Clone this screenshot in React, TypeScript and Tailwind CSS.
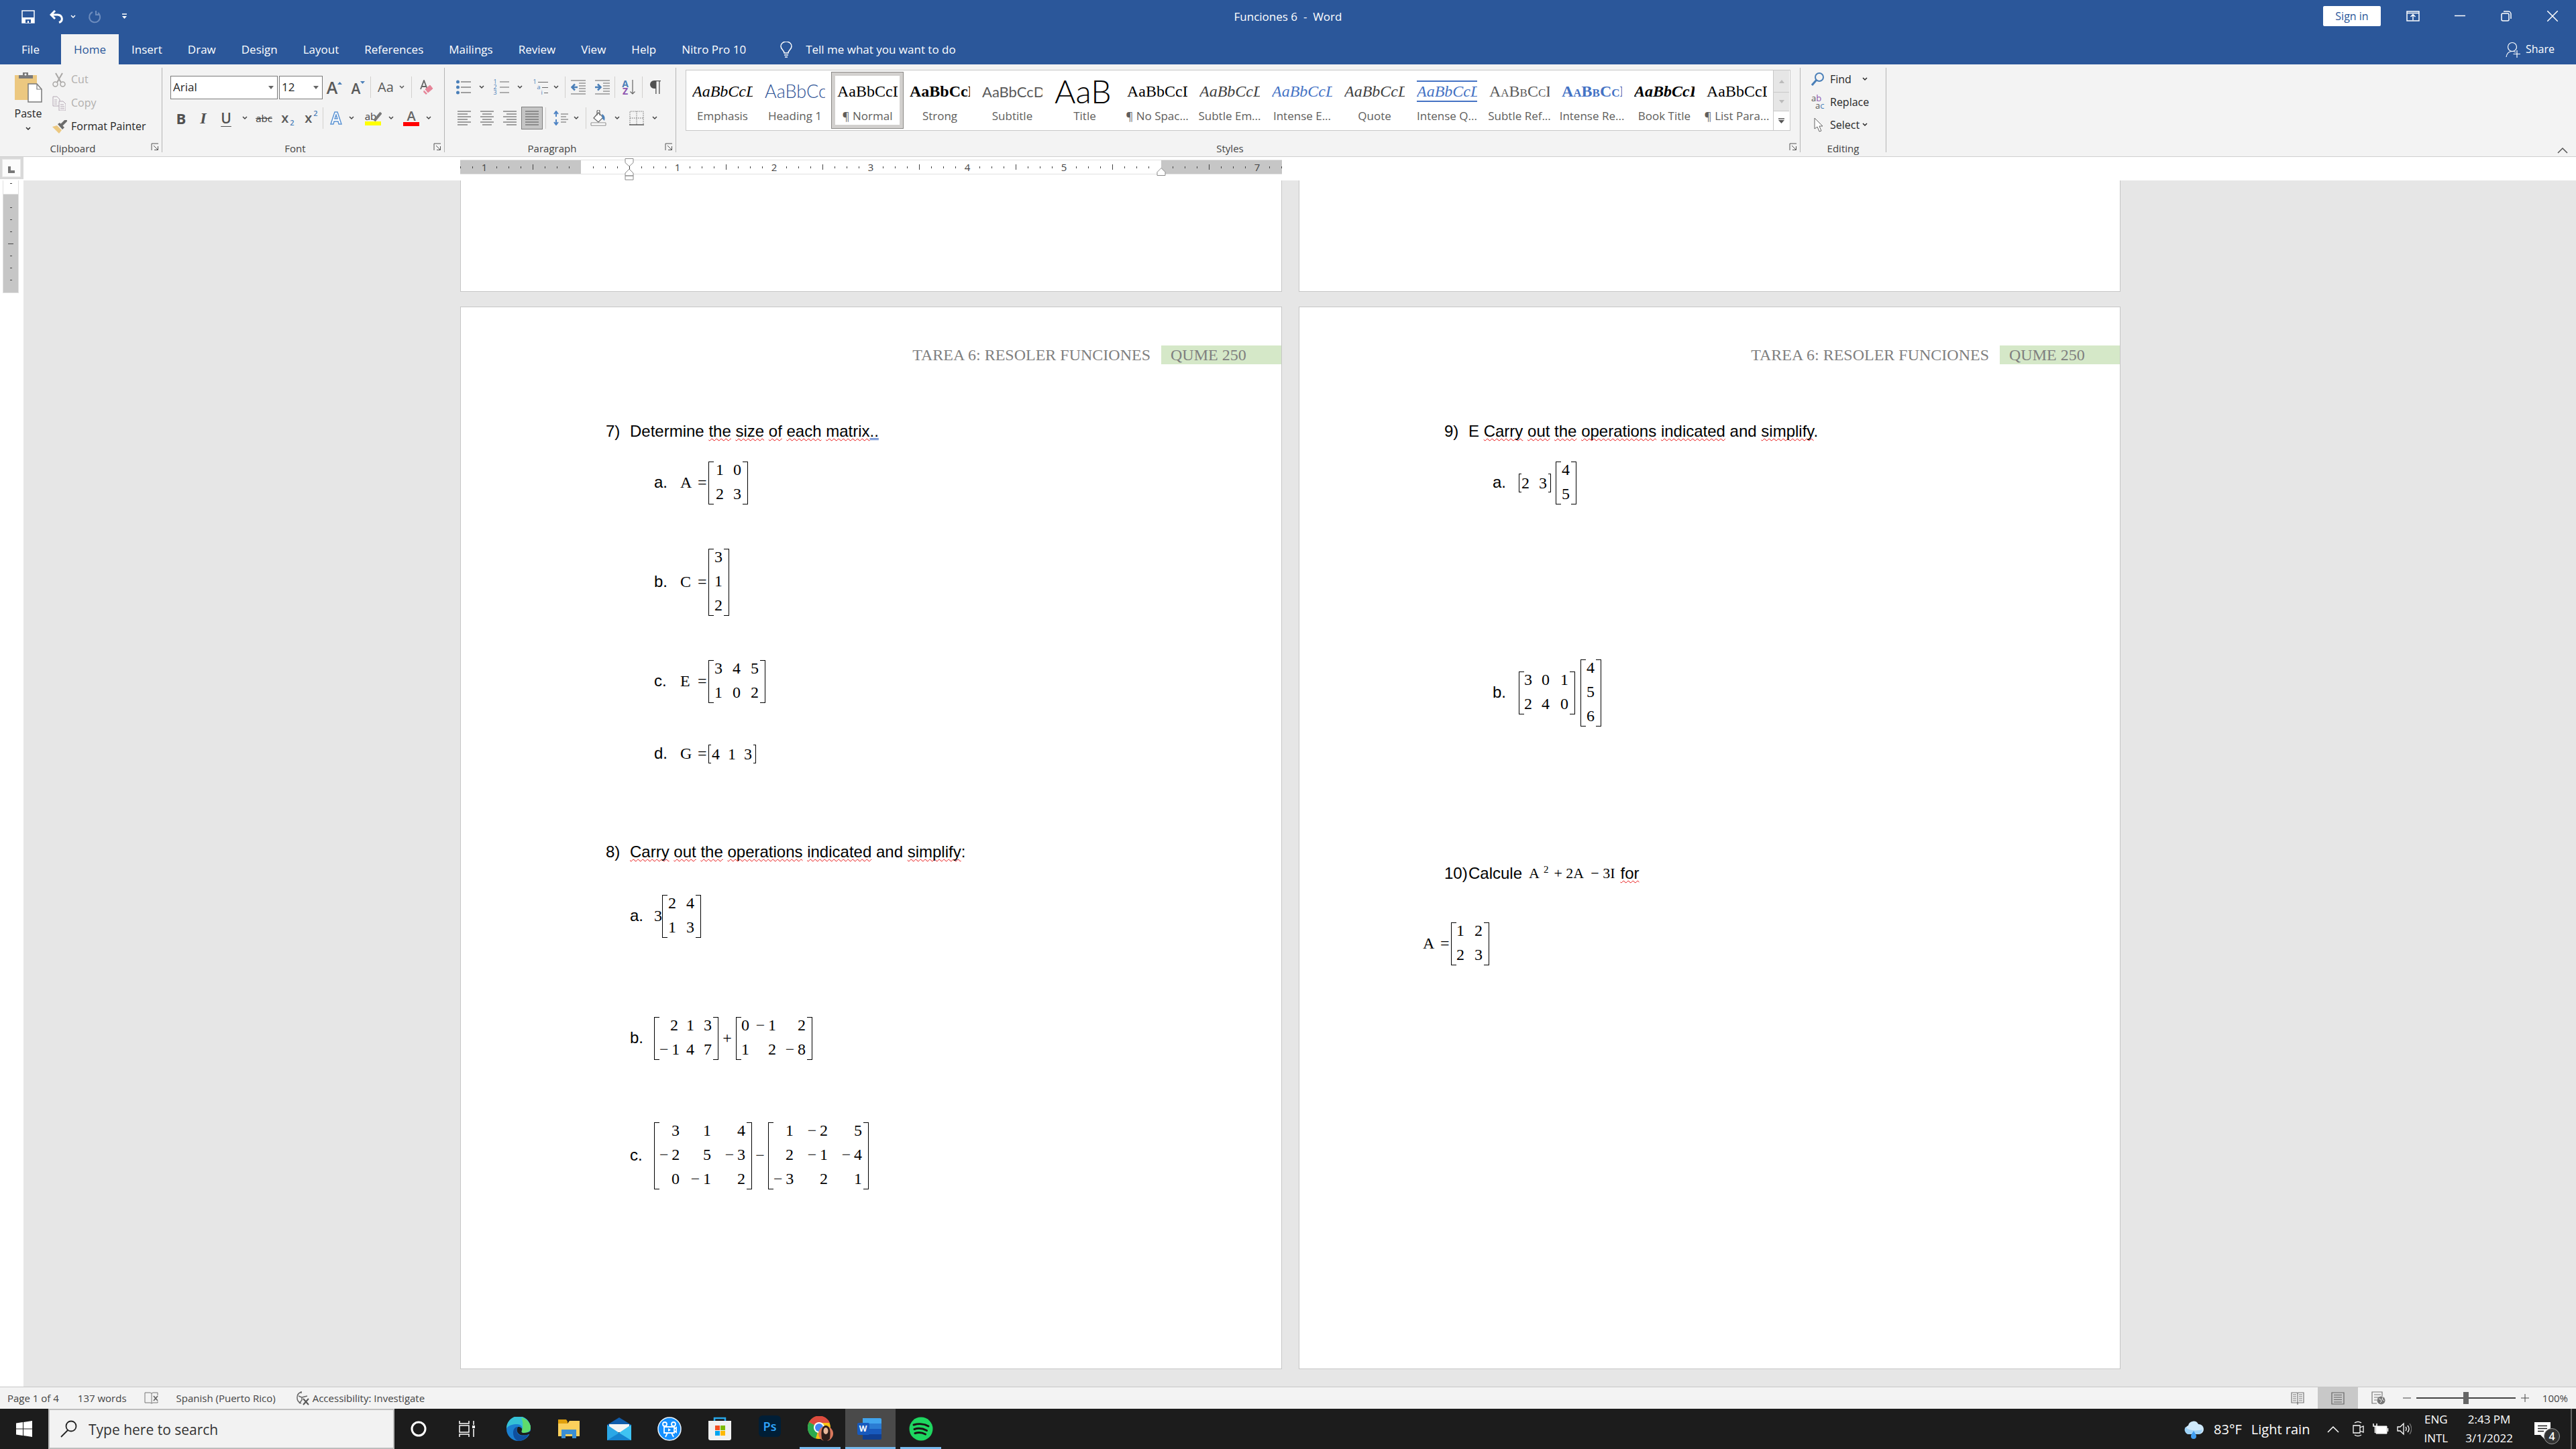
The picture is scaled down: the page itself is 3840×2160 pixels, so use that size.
import { Fragment, ReactNode } from "react";
import { twMerge } from "tailwind-merge";

const tabs = [
  "Insert",
  "Draw",
  "Design",
  "Layout",
  "References",
  "Mailings",
  "Review",
  "View",
  "Help",
  "Nitro Pro 10",
];

const serif = "font-['Liberation_Serif',serif] text-2xl leading-7";
const lato = "font-[Lato,sans-serif] font-light";

const styleItems = [
  { name: "Emphasis", look: "italic text-black" },
  { name: "Heading 1", look: twMerge(lato, "text-[27px] text-[#2f5496]") },
  { name: "¶ Normal", look: "text-black", active: true },
  { name: "Strong", look: "font-bold text-black" },
  { name: "Subtitle", look: twMerge(lato, "font-normal text-[22px] text-[#5a5a5a]") },
  { name: "Title", look: twMerge(lato, "text-5xl text-black"), sample: "AaB" },
  { name: "¶ No Spac...", look: "text-black" },
  { name: "Subtle Em...", look: "italic text-[#404040]" },
  { name: "Intense E...", look: "italic text-[#4472c4]" },
  { name: "Quote", look: "italic text-[#404040]" },
  { name: "Intense Q...", look: "italic text-[#4472c4] border-y-2 border-[#4472c4]" },
  { name: "Subtle Ref...", look: "text-[#5a5a5a] [font-variant-caps:small-caps]" },
  { name: "Intense Re...", look: "font-bold text-[#4472c4] [font-variant-caps:small-caps]" },
  { name: "Book Title", look: "italic font-bold text-black" },
  { name: "¶ List Para...", look: "text-black" },
];

/* ---------- small shared pieces ---------- */

function Svg({
  w,
  h,
  children,
  className,
}: {
  w: number;
  h: number;
  children: ReactNode;
  className?: string;
}) {
  return (
    <svg
      width={w}
      height={h}
      viewBox={`0 0 ${w} ${h}`}
      fill="none"
      aria-hidden="true"
      className={twMerge("shrink-0", className)}
    >
      {children}
    </svg>
  );
}

function Chevron({ className }: { className?: string }) {
  return (
    <Svg w={8} h={6} className={className}>
      <path d="M1 1l3 3 3-3" stroke="currentColor" strokeWidth="1.5" />
    </Svg>
  );
}

function Tool({
  label,
  className,
  menu,
  children,
}: {
  label: string;
  className?: string;
  menu?: boolean;
  children: ReactNode;
}) {
  return (
    <button
      type="button"
      aria-label={label}
      className={twMerge("flex h-9 items-center justify-center gap-3 text-[#444]", className)}
    >
      {children}
      {menu && <Chevron />}
    </button>
  );
}

function Divider() {
  return <span className="h-8 w-px shrink-0 bg-[#d2d0ce]" />;
}

function Group({
  title,
  className,
  pad,
  launcher,
  children,
}: {
  title: string;
  className?: string;
  pad?: string;
  launcher?: boolean;
  children: ReactNode;
}) {
  return (
    <section
      aria-label={title}
      className={twMerge("relative mt-[5px] h-[126px] shrink-0 border-r border-[#b5b5b5]", className)}
    >
      <div className={twMerge("h-[111px]", pad)}>{children}</div>
      <div
        className={twMerge(
          "flex h-[18px] items-center justify-center text-[15px] leading-[18px] text-[#444]",
          launcher && "pr-6"
        )}
      >
        {title}
      </div>
      {launcher && (
        <button type="button" aria-label={`${title} settings`} className="absolute right-1 bottom-0.5">
          <Svg w={12} h={12}>
            <path d="M1 11V1h10M4 4l6 6M10.500 5v5.500H5" stroke="#555" />
          </Svg>
        </button>
      )}
    </section>
  );
}

function Lines({ rows }: { rows: [number, number][] }) {
  return (
    <Svg w={22} h={22}>
      {rows.map(([from, to], i) => (
        <path key={i} d={`M${from} ${1 + i * 4}H${to}`} stroke="#666" strokeWidth="1.2" />
      ))}
    </Svg>
  );
}

/* ---------- title bar and tabs ---------- */

function TitleBar() {
  return (
    <header className="bg-[#2b579a] text-white">
      <div className="grid h-[51px] grid-cols-[1fr_auto_1fr] items-start">
        <div className="flex h-[49px] items-center pl-8">
          <button type="button" aria-label="Save">
            <Svg w={20} h={20}>
              <path d="M1 1h18v18H1z" stroke="#fff" strokeWidth="1.500" />
              <path d="M1 11h18v8H1z" fill="#fff" />
              <path d="M6 14h8v5h-3v-3H9v3H6z" fill="#2b579a" />
            </Svg>
          </button>
          <button type="button" aria-label="Undo" className="ml-[22px]">
            <Svg w={23} h={20}>
              <path d="M8 1L2 7l6 6M3 7h9a7 6 0 0 1 2 11.500" stroke="#fff" strokeWidth="3" />
            </Svg>
          </button>
          <button type="button" aria-label="Undo history" className="ml-2">
            <Chevron />
          </button>
          <button type="button" aria-label="Repeat" className="ml-[18px]">
            <Svg w={20} h={20}>
              <path d="M7 3a8 8 0 1 0 8 1M12 1v6h6" stroke="#6d8cbd" strokeWidth="2" />
            </Svg>
          </button>
          <button type="button" aria-label="Customize toolbar" className="ml-[30px]">
            <Svg w={9} h={9}>
              <path d="M1 1h7" stroke="#fff" strokeWidth="1.500" />
              <path d="M1 4h7l-3.500 4z" fill="#fff" />
            </Svg>
          </button>
        </div>
        <h1 className="flex h-[49px] items-center text-[17px] whitespace-pre">Funciones 6  -  Word</h1>
        <div className="flex h-[47px] items-center justify-end pr-[27px]">
          <button
            type="button"
            className="mr-[38px] h-[30px] w-[86px] rounded-[2px] bg-white text-base leading-[30px] text-[#2b579a]"
          >
            Sign in
          </button>
          <button type="button" aria-label="Ribbon display options" className="mr-[52px]">
            <Svg w={20} h={16}>
              <path d="M1 1h18v14H1zM1 3.500h18M10 14V6M6.500 9L10 5.500 13.500 9" stroke="#fff" strokeWidth="1.500" />
            </Svg>
          </button>
          <button type="button" aria-label="Minimize" className="mr-[53px]">
            <Svg w={16} h={16}>
              <path d="M0 7.500h16" stroke="#fff" strokeWidth="1.500" />
            </Svg>
          </button>
          <button type="button" aria-label="Restore" className="mr-[53px]">
            <Svg w={16} h={16}>
              <rect x="1" y="4" width="11" height="11" rx="2" stroke="#fff" strokeWidth="1.500" />
              <path d="M4 1h7a4 4 0 0 1 4 4v7" stroke="#fff" strokeWidth="1.500" />
            </Svg>
          </button>
          <button type="button" aria-label="Close">
            <Svg w={16} h={16}>
              <path d="M0 0l16 16M16 0L0 16" stroke="#fff" strokeWidth="1.500" />
            </Svg>
          </button>
        </div>
      </div>

      <nav className="flex h-[45px] items-center text-[17px] leading-[45px]">
        <button type="button" className="w-[91px]">
          File
        </button>
        <button type="button" className="w-[86px] bg-[#f3f3f3] text-[#2b579a]">
          Home
        </button>
        {tabs.map((tab) => (
          <button type="button" key={tab} className="px-[19px] whitespace-nowrap">
            {tab}
          </button>
        ))}
        <label className="ml-8 flex flex-1 items-center gap-5">
          <Svg w={18} h={24}>
            <path
              d="M6 17c0-4-5-5-5-10a8 7 0 0 1 16 0c0 5-5 6-5 10zM6 20h6M7 23h4"
              stroke="#fff"
              strokeWidth="1.500"
            />
          </Svg>
          <input
            aria-label="Tell me what you want to do"
            placeholder="Tell me what you want to do"
            className="w-80 outline-none placeholder:text-white placeholder:opacity-100"
          />
        </label>
        <button type="button" className="flex items-center gap-2 pr-8 text-base leading-[45px]">
          <Svg w={22} h={24}>
            <circle cx="10" cy="8" r="6.500" stroke="#fff" strokeWidth="1.200" />
            <path d="M1 23c1-6 4-8.500 9-8.500 2 0 4 .5 5 1.500M17 13v11M11.500 18.500h11" stroke="#fff" strokeWidth="1.200" />
          </Svg>
          Share
        </button>
      </nav>
    </header>
  );
}

/* ---------- ribbon ---------- */

function Clipboard() {
  return (
    <Group title="Clipboard" launcher className="w-[242px]">
      <div className="flex">
        <button type="button" className="ml-[18px] flex w-12 flex-col items-center pt-1.5 text-base leading-6 text-[#262626]">
          <Svg w={42} h={46}>
            <path d="M1 5h33v37H1z" fill="#ecc880" />
            <path d="M7 5h6V1h8v4h7v5H7z" fill="#7a7a7a" />
            <circle cx="17" cy="4" r="1.500" fill="#fff" />
            <path d="M21 18h13l7 8v19H21z" fill="#fff" stroke="#7a7a7a" strokeWidth="1.500" />
            <path d="M34 18v8h7" stroke="#7a7a7a" strokeWidth="1.200" />
          </Svg>
          <span className="mt-1">Paste</span>
          <Chevron className="mt-2" />
        </button>
        <div className="ml-3 flex flex-col text-base leading-[35px] text-[#b1afad]">
          <button type="button" className="flex items-center gap-2">
            <Svg w={20} h={22}>
              <path d="M5 1l8 14M15 1L7 15" stroke="#a9a7a5" strokeWidth="2" />
              <circle cx="4.500" cy="17.500" r="3.500" stroke="#a9a7a5" strokeWidth="1.500" />
              <circle cx="15.500" cy="17.500" r="3.500" stroke="#a9a7a5" strokeWidth="1.500" />
            </Svg>
            Cut
          </button>
          <button type="button" className="flex items-center gap-2">
            <Svg w={20} h={22}>
              <path d="M1 1h6l4 4v10H1zM3 6h4M3 9h4M3 12h4" stroke="#b5a9b5" />
              <path d="M10 8h6l4 4v10H10z" fill="#f3f3f3" stroke="#b5a9b5" />
              <path d="M12 13h5M12 16h6M12 19h6" stroke="#b5a9b5" />
            </Svg>
            Copy
          </button>
          <button type="button" className="flex items-center gap-1.5 text-[#262626]">
            <Svg w={22} h={20}>
              <path d="M0 10l7-2 7 7-4 5z" fill="#ecc880" />
              <path d="M8 6l3-2 7 7-3 3z" fill="#6b6b6b" />
              <path d="M14 7l6-6" stroke="#6b6b6b" strokeWidth="4" strokeLinecap="round" />
            </Svg>
            Format Painter
          </button>
        </div>
      </div>
    </Group>
  );
}

function Combo({ label, value, className }: { label: string; value: string; className: string }) {
  return (
    <div className={twMerge("relative h-[35px]", className)}>
      <select
        aria-label={label}
        className="h-full w-full appearance-none border border-[#7a7a7a] bg-white pl-[3px] text-[17px] text-[#262626]"
      >
        <option>{value}</option>
      </select>
      <Svg w={8} h={5} className="absolute top-[15px] right-1.5">
        <path d="M0 0h8L4 5z" fill="#666" />
      </Svg>
    </div>
  );
}

function FontGroup() {
  return (
    <Group title="Font" launcher className="w-[421px]" pad="pl-3">
      <div className="flex items-center pt-[11px]">
        <Combo label="Font name" value="Arial" className="w-40" />
        <Combo label="Font size" value="12" className="ml-0.5 w-[65px]" />
        <Tool label="Grow font" className="w-[35px] gap-0 text-[25px] leading-none font-semibold text-[#595959]">
          A
          <Svg w={7} h={16}>
            <path d="M0 4h7L3.500 0z" fill="#4a7fb8" />
          </Svg>
        </Tool>
        <Tool label="Shrink font" className="w-9 gap-0 pt-1 text-[21px] leading-none font-semibold text-[#595959]">
          A
          <Svg w={7} h={22}>
            <path d="M0 0h7L3.500 4z" fill="#4a7fb8" />
          </Svg>
        </Tool>
        <Divider />
        <Tool label="Change case" menu className="w-[60px] gap-2 text-xl leading-none text-[#595959]">
          Aa
        </Tool>
        <Divider />
        <Tool label="Clear formatting" className="w-11">
          <Svg w={20} h={22}>
            <path d="M1 14L6 1l5 13M3 10h6" stroke="#666" strokeWidth="1.800" />
            <path d="M8 14l7-6 4 5-7 6z" fill="#e68498" stroke="#e68498" />
            <path d="M6 15.500l5 5-2 1.500-4-4z" fill="#e68498" />
          </Svg>
        </Tool>
      </div>
      <div className="mt-2.5 flex items-center">
        <Tool label="Bold" className="w-8 text-[22px] leading-none font-bold text-[#505050]">
          B
        </Tool>
        <Tool label="Italic" className="w-[34px] font-['Liberation_Serif',serif] text-2xl leading-none font-bold italic text-[#505050]">
          I
        </Tool>
        <Tool label="Underline" className="w-[34px] text-[21px] leading-none font-semibold text-[#505050] underline decoration-1 underline-offset-4">
          U
        </Tool>
        <Tool label="Underline style" className="w-[22px]">
          <Chevron />
        </Tool>
        <Tool label="Strikethrough" className="w-[35px] text-[15px] leading-none line-through">
          abc
        </Tool>
        <Tool label="Subscript" className="w-9 gap-0.5 text-xl leading-none font-semibold text-[#595959]">
          x<span className="pt-3 text-[11px] leading-none text-[#4a7fb8]">2</span>
        </Tool>
        <Tool label="Superscript" className="w-[34px] gap-0.5 text-xl leading-none font-semibold text-[#595959]">
          x<span className="pb-4 text-[11px] leading-none text-[#4a7fb8]">2</span>
        </Tool>
        <Divider />
        <Tool label="Text effects" menu className="w-[55px] gap-2.5">
          <Svg w={18} h={20}>
            <path
              d="M1 19L7 1h4l6 18h-4l-1-4H6l-1 4zM7 11h4L9 5z"
              fill="#fff"
              stroke="#5b93d3"
              strokeWidth="1.500"
            />
          </Svg>
        </Tool>
        <Tool label="Text highlight color" menu className="w-[57px] gap-2.5">
          <span className="flex flex-col items-center text-[15px] leading-4">
            <span className="flex">
              ab
              <Svg w={12} h={16} className="-ml-1">
                <path d="M1 15l10-12" stroke="#777" strokeWidth="4" />
              </Svg>
            </span>
            <span className="h-1.5 w-6 bg-[#ff0]" />
          </span>
        </Tool>
        <Tool label="Font color" menu className="w-14 gap-2.5">
          <span className="flex flex-col items-center text-xl leading-4 font-semibold text-[#666]">
            A
            <span className="mt-px h-1.5 w-6 bg-[#f00]" />
          </span>
        </Tool>
      </div>
    </Group>
  );
}

function ParagraphGroup() {
  return (
    <Group title="Paragraph" launcher className="w-[345px]" pad="pl-2.5">
      <div className="flex items-center pt-[11px]">
        <Tool label="Bullets" menu className="w-14">
          <Svg w={22} h={22}>
            {[3, 11, 19].map((y) => (
              <Fragment key={y}>
                <circle cx="2.500" cy={y} r="2.500" fill="#4a7fb8" />
                <path d={`M7 ${y}h15`} stroke="#666" strokeWidth="1.200" />
              </Fragment>
            ))}
          </Svg>
        </Tool>
        <Tool label="Numbering" menu className="w-14">
          <span className="flex items-center gap-1">
            <span className="text-[9px] leading-2 text-[#4a7fb8]">
              1<br />2<br />3
            </span>
            <Svg w={14} h={22}>
              <path d="M0 3h14M0 11h14M0 19h14" stroke="#666" strokeWidth="1.200" />
            </Svg>
          </span>
        </Tool>
        <Tool label="Multilevel list" menu className="w-[57px] gap-2">
          <span className="flex w-[22px] flex-col text-[9px] leading-2 text-[#4a7fb8]">
            <span className="flex items-center gap-0.5">
              1<span className="h-px flex-1 bg-[#666]" />
            </span>
            <span className="flex items-center gap-0.5 pl-1.5">
              a<span className="h-px flex-1 bg-[#666]" />
            </span>
            <span className="flex items-center gap-0.5 pl-3">
              i<span className="h-px flex-1 bg-[#666]" />
            </span>
          </span>
        </Tool>
        <Divider />
        <Tool label="Decrease indent" className="w-[37px]">
          <Svg w={22} h={22}>
            <path d="M0 1h22M12 5h10M12 9h10M12 13h10M12 17h10M0 21h22" stroke="#666" strokeWidth="1.200" />
            <path d="M10 11H2M6 6.500L1.500 11 6 15.500" stroke="#4a7fb8" strokeWidth="2.500" />
          </Svg>
        </Tool>
        <Tool label="Increase indent" className="w-9">
          <Svg w={22} h={22}>
            <path d="M0 1h22M12 5h10M12 9h10M12 13h10M12 17h10M0 21h22" stroke="#666" strokeWidth="1.200" />
            <path d="M0 11h8M4 6.500L8.500 11 4 15.500" stroke="#4a7fb8" strokeWidth="2.500" />
          </Svg>
        </Tool>
        <Divider />
        <Tool label="Sort" className="w-10 gap-0.5">
          <span className="flex flex-col text-sm leading-[11px] font-bold text-[#4a7fb8]">
            A<span className="text-[#8e56b0]">Z</span>
          </span>
          <Svg w={8} h={22}>
            <path d="M4 0v21M.5 17.500L4 21l3.500-3.500" stroke="#666" strokeWidth="1.200" />
          </Svg>
        </Tool>
        <Divider />
        <Tool label="Show marks" className="w-[38px]">
          <Svg w={16} h={20}>
            <path d="M6 0h10v1.300h-1.500V20h-1.300V1.300H9.500V20H8.200V12H6A6 6 0 0 1 6 0z" fill="#505050" />
          </Svg>
        </Tool>
      </div>
      <div className="mt-2.5 flex items-center">
        <Tool label="Align left" className="ml-0.5 w-[34px]">
          <Lines rows={[[1, 21], [1, 16], [1, 21], [1, 16], [1, 21], [1, 16]]} />
        </Tool>
        <Tool label="Center" className="w-[34px]">
          <Lines rows={[[1, 21], [4, 18], [1, 21], [4, 18], [1, 21], [4, 18]]} />
        </Tool>
        <Tool label="Align right" className="w-[34px]">
          <Lines rows={[[1, 21], [6, 21], [1, 21], [6, 21], [1, 21], [6, 21]]} />
        </Tool>
        <Tool label="Justify" className="mr-1 h-[34px] w-8 border border-[#7d7d7d] bg-[#c5c5c5]">
          <Lines rows={[[1, 21], [1, 21], [1, 21], [1, 21], [1, 21], [1, 21]]} />
        </Tool>
        <Divider />
        <Tool label="Line spacing" menu className="w-[59px] gap-2">
          <Svg w={22} h={22}>
            <path d="M4 9V2M1 5l3-4 3 4M4 13v7M1 17l3 4 3-4" stroke="#4f84c4" strokeWidth="2" />
            <path d="M11 5h11M11 9h8M11 13h11M11 17h8" stroke="#666" strokeWidth="1.200" />
          </Svg>
        </Tool>
        <Divider />
        <Tool label="Shading" menu className="w-14">
          <Svg w={24} h={24}>
            <path d="M5 12l7-8 7 7-7 7z" fill="#fff" stroke="#666" strokeWidth="1.200" />
            <path d="M10 8V2a2 2 0 0 1 4 0v6" stroke="#666" strokeWidth="1.200" />
            <path d="M17 6c5 2 5 6 4 10l-3-3z" fill="#4a7fb8" />
            <path d="M1 19h22v4H1z" fill="#fff" stroke="#8a8a8a" />
          </Svg>
        </Tool>
        <Tool label="Borders" menu className="w-[58px]">
          <Svg w={22} h={22}>
            <path d="M1 21V1h20v20M11 1v20M1 11h20" stroke="#666" strokeDasharray="1.500 1.500" />
            <path d="M0 21h22" stroke="#555" strokeWidth="1.500" />
          </Svg>
        </Tool>
      </div>
    </Group>
  );
}

function StylesGroup() {
  return (
    <Group title="Styles" launcher className="w-[1676px]" pad="pt-[3px]">
      <div className="ml-3.5 flex h-[91px] w-[1647px] border border-[#c8c8c8] bg-white">
        {styleItems.map(({ name, look, sample, active }) => (
          <button
            type="button"
            key={name}
            className={twMerge(
              "mt-0.5 flex h-[85px] w-[108px] shrink-0 flex-col items-center border border-transparent text-[#605e5c]",
              active && "border-[#8a8886] ring-[5px] ring-[#d2d0ce] ring-inset"
            )}
          >
            <span className="flex h-[56px] w-[90px] items-center overflow-hidden">
              <span className={twMerge(serif, "w-full overflow-hidden text-left whitespace-nowrap", sample && "leading-[50px]", look)}>
                {sample ?? "AaBbCcDd"}
              </span>
            </span>
            <span className="text-[17px] leading-[18px] whitespace-nowrap">{name}</span>
          </button>
        ))}
        <div className="flex w-6 flex-col border-l border-[#c8c8c8]">
          <button type="button" aria-label="Previous styles" className="flex h-8 items-center justify-center bg-[#e6e6e6]">
            <Svg w={8} h={5}>
              <path d="M0 5h8L4 0z" fill="#bbb" />
            </Svg>
          </button>
          <button type="button" aria-label="Next styles" className="flex h-[29px] items-center justify-center border-y border-[#c8c8c8] bg-[#e6e6e6]">
            <Svg w={8} h={5}>
              <path d="M0 0h8L4 5z" fill="#bbb" />
            </Svg>
          </button>
          <button type="button" aria-label="More styles" className="flex flex-1 items-center justify-center">
            <Svg w={9} h={8}>
              <path d="M0 1h9" stroke="#555" strokeWidth="1.500" />
              <path d="M0 3h9L4.500 8z" fill="#555" />
            </Svg>
          </button>
        </div>
      </div>
    </Group>
  );
}

function EditingGroup() {
  return (
    <Group title="Editing" className="w-32">
      <div className="flex flex-col pl-4 text-base leading-[34px] text-[#262626]">
        <button type="button" className="flex items-center gap-2">
          <Svg w={20} h={20}>
            <circle cx="12" cy="7" r="6" stroke="#4a7fb8" strokeWidth="2" />
            <path d="M8 11l-7 8" stroke="#4a7fb8" strokeWidth="3" />
          </Svg>
          Find
          <Chevron className="ml-2" />
        </button>
        <button type="button" className="flex items-center gap-2">
          <span className="w-5 text-left text-[13px] leading-[11px] text-[#555]">
            a<span className="text-[#8e56b0]">b</span>
            <br />
            <span className="pl-1.5">
              a<span className="text-[#4a7fb8]">c</span>
            </span>
          </span>
          Replace
        </button>
        <button type="button" className="flex items-center gap-2">
          <Svg w={20} h={22}>
            <path d="M5 1v16l4-3 3 7 3-1-3-7h5z" fill="#fff" stroke="#666" />
          </Svg>
          Select
          <Chevron className="-ml-1" />
        </button>
      </div>
    </Group>
  );
}

function Ribbon() {
  return (
    <div className="flex h-[138px] border-b border-[#cfcfcf] bg-[#f3f3f3]">
      <Clipboard />
      <FontGroup />
      <ParagraphGroup />
      <StylesGroup />
      <EditingGroup />
      <button type="button" aria-label="Collapse ribbon" className="mr-3 mb-1 ml-auto self-end">
        <Svg w={16} h={10}>
          <path d="M1 9l7-7 7 7" stroke="#555" strokeWidth="1.500" />
        </Svg>
      </button>
    </div>
  );
}

/* ---------- rulers ---------- */

// one cell every eighth of an inch, zero sits on the text margin
const rulerMarks = Array.from({ length: 69 }, (_, i) => i - 10);

function RulerMark({ mark }: { mark: number }) {
  if (mark % 8 === 0 && mark !== 0 && mark !== 48) return <>{Math.abs(mark / 8)}</>;
  if (mark === 0 || mark === 48) return null;
  if (mark % 4 === 0) return <span className="h-2 w-px bg-[#444]" />;
  return <span className="h-[3px] w-px bg-[#444]" />;
}

function HorizontalRuler() {
  return (
    <div className="flex h-[35px] bg-white">
      <button type="button" aria-label="Tab stop" className="h-[33px] w-[35px] shrink-0 bg-[#d9d9d9] pl-[3px]">
        <span className="flex h-[27px] w-7 items-center justify-center border border-[#e8e8e8] bg-[#fcfcfc]">
          <Svg w={10} h={10} className="mt-1">
            <path d="M0 0h4v6h6v4H0z" fill="#777" />
          </Svg>
        </span>
      </button>
      <div className="flex flex-1 justify-center pr-7">
        <div className="w-[2475px]">
          <div className="relative mt-1 w-[1225px]">
            <div className="overflow-hidden border-y border-[#e1e1e1] bg-[linear-gradient(to_right,#c6c6c6_180px,#fff_180px,#fff_1045px,#c6c6c6_1045px)]">
              <div className="-ml-[9px] flex h-5">
                {rulerMarks.map((mark) => (
                  <span
                    key={mark}
                    className="flex w-[18px] shrink-0 items-center justify-center text-[15px] leading-5 text-[#444]"
                  >
                    <RulerMark mark={mark} />
                  </span>
                ))}
              </div>
            </div>
            <Svg w={14} h={33} className="absolute -top-0.5 left-[245px]">
              <path
                d="M1 .5h12v6L7 12 1 6.500zM7 16l6 6v4H1v-4zM1 26h12v6H1z"
                fill="#fff"
                stroke="#8a8a8a"
              />
            </Svg>
            <Svg w={14} h={12} className="absolute top-3 left-[1038px]">
              <path d="M7 .5l6 6v5H1v-5z" fill="#fff" stroke="#8a8a8a" />
            </Svg>
          </div>
        </div>
      </div>
    </div>
  );
}

function VerticalRuler() {
  return (
    <div className="w-[35px] shrink-0 bg-white pl-1">
      <div className="flex h-5 w-6 justify-center border-x border-[#e1e1e1] pt-1">
        <span className="h-px w-[3px] bg-[#444]" />
      </div>
      <div className="flex h-[148px] w-6 flex-col border border-[#e1e1e1] bg-[#c6c6c6] pt-2.5">
        {[1, 2, 3, 4, 5, 6, 7].map((mark) => (
          <span key={mark} className="flex h-[18px] items-center justify-center">
            <span className={twMerge("h-px bg-[#444]", mark === 4 ? "w-2" : "w-[3px]")} />
          </span>
        ))}
      </div>
    </div>
  );
}

/* ---------- document ---------- */

function Typo({ children }: { children: string }) {
  return (
    <>
      {children.split(" ").map((word, i) => (
        <Fragment key={i}>
          {i > 0 && " "}
          <span className="underline decoration-[#e81010] decoration-wavy decoration-1 underline-offset-2 [text-decoration-skip-ink:none]">
            {word}
          </span>
        </Fragment>
      ))}
    </>
  );
}

function Matrix({ rows, cols }: { rows: string[]; cols: string }) {
  const single = rows.length === 1;
  return (
    <span className="flex">
      <span className={twMerge("border-y border-l border-black", single ? "w-1" : "w-2")} />
      <span
        className={twMerge(
          "grid gap-y-3 text-right leading-6 whitespace-nowrap",
          single ? "py-0.5" : "pb-1",
          cols
        )}
      >
        {rows.flatMap((row, r) =>
          row.split(" ").map((cell, c) => <span key={`${r}-${c}`}>{cell.replace("−", "−\u2009")}</span>)
        )}
      </span>
      <span className={twMerge("ml-0.5 border-y border-r border-black", single ? "w-1" : "w-2")} />
    </span>
  );
}

function Question({ no, className, children }: { no: string; className?: string; children: ReactNode }) {
  return (
    <div className={twMerge("flex items-center pl-[216px] text-2xl leading-7 whitespace-nowrap", className)}>
      <span className="w-9">{no}</span>
      <p className="flex items-center whitespace-pre">{children}</p>
    </div>
  );
}

function Item({
  label,
  outdent,
  className,
  children,
}: {
  label?: string;
  outdent?: boolean;
  className?: string;
  children: ReactNode;
}) {
  return (
    <div
      className={twMerge("flex items-center text-2xl leading-7", outdent ? "pl-[252px]" : "pl-72", className)}
    >
      {label && <span className={twMerge("pb-0.5", outdent ? "w-9" : "w-[39px]")}>{label}</span>}
      <span className={twMerge(serif, "flex items-center")}>{children}</span>
    </div>
  );
}

function Name({ children }: { children: string }) {
  return (
    <>
      <span className="w-[26px] pb-0.5">{children}</span>
      <span className="w-4 pb-0.5">=</span>
    </>
  );
}

function Page({ children }: { children: ReactNode }) {
  return (
    <article className="h-[1584px] border border-[#c6c6c6] bg-white text-black">
      <div className={twMerge(serif, "mt-[57px] flex justify-end text-[#7f7f7f]")}>
        <span className="pr-4">TAREA 6: RESOLER FUNCIONES</span>
        <span className="w-[179px] bg-[#d5e8c8] pl-3.5">QUME 250</span>
      </div>
      {children}
    </article>
  );
}

function LeftPage() {
  return (
    <Page>
      <Question no="7)" className="mt-[86px]">
        <span>
          Determine <Typo>the size of each matrix</Typo>
          <span className="underline decoration-[#2f5fc0] decoration-double decoration-1 underline-offset-2">..</span>
        </span>
      </Question>
      <Item label="a." className="mt-[31px]">
        <Name>A</Name>
        <Matrix rows={["1 0", "2 3"]} cols="grid-cols-[15px_26px]" />
      </Item>
      <Item label="b." className="mt-[66px]">
        <Name>C</Name>
        <Matrix rows={["3", "1", "2"]} cols="grid-cols-[13px]" />
      </Item>
      <Item label="c." className="mt-[66px]">
        <Name>E</Name>
        <Matrix rows={["3 4 5", "1 0 2"]} cols="grid-cols-[13px_27px_27px]" />
      </Item>
      <Item label="d." className="mt-[61px]">
        <Name>G</Name>
        <Matrix rows={["4 1 3"]} cols="grid-cols-[13px_24px_24px]" />
      </Item>

      <Question no="8)" className="mt-[117px]">
        <span>
          <Typo>Carry out the operations indicated</Typo> and <Typo>simplify</Typo>:
        </span>
      </Question>
      <Item label="a." outdent className="mt-[50px]">
        <span className="pb-0.5">3</span>
        <Matrix rows={["2 4", "1 3"]} cols="grid-cols-[13px_27px]" />
      </Item>
      <Item label="b." outdent className="mt-[118px]">
        <Matrix rows={["2 1 3", "−1 4 7"]} cols="grid-cols-[28px_24px_26px]" />
        <span className="w-[26px] pb-0.5 text-center">+</span>
        <Matrix rows={["0 −1 2", "1 2 −8"]} cols="grid-cols-[12px_40px_44px]" />
      </Item>
      <Item label="c." outdent className="mt-[93px]">
        <Matrix rows={["3 1 4", "−2 5 −3", "0 −1 2"]} cols="grid-cols-[30px_47px_51px]" />
        <span className="w-6 pb-0.5 text-center">−</span>
        <Matrix rows={["1 −2 5", "2 −1 −4", "−3 2 1"]} cols="grid-cols-[30px_51px_51px]" />
      </Item>
    </Page>
  );
}

function RightPage() {
  return (
    <Page>
      <Question no="9)" className="mt-[86px]">
        <span>
          E <Typo>Carry out the operations indicated</Typo> and <Typo>simplify</Typo>.
        </span>
      </Question>
      <Item label="a." className="mt-[31px]">
        <Matrix rows={["2 3"]} cols="grid-cols-[12px_26px]" />
        <span className="w-[7px]" />
        <Matrix rows={["4", "5"]} cols="grid-cols-[13px]" />
      </Item>
      <Item label="b." className="mt-[231px]">
        <Matrix rows={["3 0 1", "2 4 0"]} cols="grid-cols-[12px_26px_28px]" />
        <span className="w-2" />
        <Matrix rows={["4", "5", "6"]} cols="grid-cols-[13px]" />
      </Item>
      <Question no="10)" className="mt-[205px]">
        Calcule
        <span className={twMerge(serif, "flex items-center pl-2.5 text-[22px]")}>
          A<sup className="top-0 pb-3 pl-1.5 text-[15px] leading-4">2</sup>
          <span className="pl-2">+ 2A</span>
          <span className="pl-2.5">− 3I</span>
        </span>
        <span className="pl-2">
          <Typo>for</Typo>
        </span>
      </Question>
      <Item className="mt-[59px] pl-[184px]">
        <Name>A</Name>
        <Matrix rows={["1 2", "2 3"]} cols="grid-cols-[12px_27px]" />
      </Item>
    </Page>
  );
}

function Workspace() {
  return (
    <main className="flex min-h-0 flex-1 overflow-hidden bg-[#e6e6e6]">
      <VerticalRuler />
      <div className="flex flex-1 justify-center pr-7 font-['Liberation_Sans',sans-serif]">
        <div className="grid grid-cols-[1225px_1225px] content-start gap-x-[25px] gap-y-[22px]">
          <div className="h-[166px] border border-t-0 border-[#c6c6c6] bg-white" />
          <div className="h-[166px] border border-t-0 border-[#c6c6c6] bg-white" />
          <LeftPage />
          <RightPage />
        </div>
      </div>
    </main>
  );
}

/* ---------- status bar ---------- */

function StatusBar() {
  return (
    <footer className="flex h-[33px] items-center border-t border-[#c6c6c6] bg-[#f3f3f3] pr-3 pl-[11px] text-[15px] leading-8 text-[#444]">
      <span>Page 1 of 4</span>
      <span className="ml-7">137 words</span>
      <Svg w={22} h={18} className="ml-[26px]">
        <path d="M1 1h8l2 1v15l-2-1H1zM11 2l2-1h7v4M11 17l2-1h7v-2" stroke="#777" />
        <path d="M14 6l6 7M20 6l-6 7" stroke="#666" strokeWidth="1.800" />
      </Svg>
      <span className="ml-[26px]">Spanish (Puerto Rico)</span>
      <Svg w={22} h={22} className="ml-[29px]">
        <path d="M9 2a9 9 0 0 0 0 17M9 1v3M5 8l5 2v4l-4 5M10 10l8-2" stroke="#666" strokeWidth="1.500" />
        <path d="M12 12l8 9M20 12l-8 9" stroke="#555" strokeWidth="2" />
      </Svg>
      <span className="ml-1">Accessibility: Investigate</span>

      <div className="ml-auto flex items-center">
        <button type="button" aria-label="Read mode" className="mr-5">
          <Svg w={20} h={19}>
            <path d="M1 1h8l1 1 1-1h8v15h-8l-1 1-1-1H1zM10 2v17" stroke="#777" strokeWidth="1.200" />
            <path d="M3 4h5M3 7h5M3 10h5M3 13h5M12 4h5M12 7h5M12 10h5M12 13h5" stroke="#777" />
          </Svg>
        </button>
        <button type="button" aria-label="Print layout" className="flex h-8 w-[60px] items-center justify-center bg-[#c8c8c8]">
          <Svg w={20} h={19}>
            <path d="M1 1h18v17H1z" stroke="#666" strokeWidth="1.200" />
            <path d="M4 4.500h12M4 8h12M4 11.500h12M4 15h12" stroke="#666" />
          </Svg>
        </button>
        <button type="button" aria-label="Web layout" className="ml-5">
          <Svg w={21} h={20}>
            <path d="M16 7V1H1v17h7M4 5h10M4 9h7M4 13h4" stroke="#777" strokeWidth="1.200" />
            <circle cx="14.500" cy="13.500" r="6" fill="#777" />
            <path d="M11 11l3 1 1 3-2 2M17 9l-1 3 3 2" stroke="#f3f3f3" />
          </Svg>
        </button>
        <button type="button" aria-label="Zoom out" className="ml-[26px]">
          <Svg w={12} h={12}>
            <path d="M0 6h12" stroke="#444" />
          </Svg>
        </button>
        <input
          type="range"
          aria-label="Zoom"
          defaultValue={50}
          className="mx-2 h-[18px] w-[148px] appearance-none bg-[linear-gradient(#444,#444)] bg-[length:100%_2px] bg-center bg-no-repeat [&::-webkit-slider-thumb]:h-[18px] [&::-webkit-slider-thumb]:w-2 [&::-webkit-slider-thumb]:appearance-none [&::-webkit-slider-thumb]:bg-[#666]"
        />
        <button type="button" aria-label="Zoom in">
          <Svg w={12} h={12}>
            <path d="M0 6h12M6 0v12" stroke="#444" />
          </Svg>
        </button>
        <span className="ml-5">100%</span>
      </div>
    </footer>
  );
}

/* ---------- taskbar ---------- */

const apps: { name: string; open?: boolean; active?: boolean; icon: ReactNode }[] = [
  {
    name: "Edge",
    icon: (
      <Svg w={36} h={36}>
        <circle cx="18" cy="18" r="18" fill="#1b7fd0" />
        <path d="M0 18A18 18 0 0 1 36 16c0 6-5 8-10 8-4 0-4-2-3-4 2-4-1-9-7-9C8 11 1 14 0 18z" fill="#35c1d6" />
        <path d="M22 1c8 2 14 8 14 15 0 6-5 8-10 8-4 0-4-2-3-4 2-5 2-12-1-19z" fill="#5fdc6c" />
        <path d="M10 24c0-6 3-9 7-9-3 4-2 9 2 12 4 2 9 2 14-1-4 8-11 10-15 10-5-1-8-6-8-12z" fill="#0f4f9e" />
        <path d="M17 15c-2 4-2 8 2 11 3 2 9 2 14 0l3 0 0-5c-2 2-6 3-10 3-4 0-4-2-3-4 1-3-2-5-6-5z" fill="#1c1c1c" />
      </Svg>
    ),
  },
  {
    name: "File Explorer",
    icon: (
      <Svg w={32} h={28}>
        <path d="M0 0h12l2 3v5H0z" fill="#e0a00c" />
        <path d="M0 6h14l3-4h15v23H0z" fill="#fbd05c" />
        <path d="M5 28V15h22v13h-6v-6H11v6z" fill="#3b8fd3" />
      </Svg>
    ),
  },
  {
    name: "Mail",
    icon: (
      <Svg w={36} h={34}>
        <path d="M0 11L18 0l18 11v4H0z" fill="#0f5cab" />
        <path d="M3 10h30v12H3z" fill="#f4f4f4" />
        <path d="M0 11l18 12 18-12v23H0z" fill="#2ba7e6" />
        <path d="M0 34l18-11 18 11z" fill="#1683cf" />
        <path d="M36 11v23L18 23z" fill="#3fc3f2" />
      </Svg>
    ),
  },
  {
    name: "Video editor",
    icon: (
      <Svg w={36} h={36}>
        <circle cx="18" cy="18" r="17" fill="#1590ff" stroke="#eef6ff" strokeWidth="1.500" />
        <circle cx="11" cy="11" r="3" stroke="#fff" strokeWidth="1.800" />
        <circle cx="24" cy="11" r="3" stroke="#fff" strokeWidth="1.800" />
        <path d="M10 15h15v9H10zM25 18l3-2v7l-3-2M15 24l-3 6M21 24l3 6" stroke="#fff" strokeWidth="1.800" />
        <path d="M16 17l4 2.500-4 2.500z" fill="#fff" />
      </Svg>
    ),
  },
  {
    name: "Microsoft Store",
    icon: (
      <Svg w={36} h={36}>
        <path d="M10 8V2h16v6" stroke="#28a8ea" strokeWidth="2.500" />
        <path d="M1 6h34v26a3 3 0 0 1-3 3H4a3 3 0 0 1-3-3z" fill="#f1f1f1" />
        <path d="M11 13h7v7h-7z" fill="#f25022" />
        <path d="M19 13h7v7h-7z" fill="#7fba00" />
        <path d="M11 21h7v7h-7z" fill="#00a4ef" />
        <path d="M19 21h7v7h-7z" fill="#ffb900" />
      </Svg>
    ),
  },
  {
    name: "Photoshop",
    icon: (
      <span className="mb-2 flex h-8 w-[33px] items-center justify-center rounded-md bg-[#001e36] text-lg leading-none font-semibold text-[#31a8ff]">
        Ps
      </span>
    ),
  },
  {
    name: "Chrome",
    open: true,
    icon: (
      <Svg w={38} h={38}>
        <circle cx="17" cy="17" r="17" fill="#fbc116" />
        <path d="M17 17L2 9A17 17 0 0 1 33 10H17z" fill="#dd4b3e" />
        <path d="M17 17l-5 16.500A17 17 0 0 1 2 9z" fill="#2da94f" />
        <circle cx="17" cy="17" r="8" fill="#fff" />
        <circle cx="17" cy="17" r="6" fill="#4285f4" />
        <circle cx="27" cy="26" r="11" fill="#d9785c" />
        <path d="M21 34c-2-14 1-20 6-20s8 6 6 20l-4 3h-5z" fill="#2b1d1a" />
        <ellipse cx="27" cy="22" rx="3.500" ry="5" fill="#e8b79a" />
      </Svg>
    ),
  },
  {
    name: "Word",
    open: true,
    active: true,
    icon: (
      <span className="relative mr-1">
        <Svg w={36} h={32}>
          <path d="M8 0h26a2 2 0 0 1 2 2v6H8z" fill="#41a5ee" />
          <path d="M8 8h28v8H8z" fill="#2b7cd3" />
          <path d="M8 16h28v8H8z" fill="#185abd" />
          <path d="M8 24h28v6a2 2 0 0 1-2 2H8z" fill="#103f91" />
          <rect y="7" width="18" height="18" rx="2" fill="#185abd" />
        </Svg>
        <span className="absolute top-[7px] left-0 w-[18px] text-center text-xs leading-[18px] font-bold text-white">
          W
        </span>
      </span>
    ),
  },
  {
    name: "Spotify",
    open: true,
    icon: (
      <Svg w={36} h={36}>
        <circle cx="18" cy="18" r="17.500" fill="#1ed760" />
        <path
          d="M7 12c7-2 16-1.500 22 2M8 18.500c6-2 13-1 18.500 2M9 24.500c5-1.500 11-1 15.500 1.500"
          stroke="#191414"
          strokeWidth="3"
          strokeLinecap="round"
        />
      </Svg>
    ),
  },
];

function Taskbar() {
  return (
    <nav aria-label="Taskbar" className="flex h-[60px] bg-[#1c1c1c] text-white">
      <button type="button" aria-label="Start" className="flex w-[72px] items-center justify-center">
        <Svg w={24} h={24}>
          <path d="M0 3.500l10-1.400v9.400H0zM11 2l13-2v11.500H11zM0 12.500h10v9.400L0 20.500zM11 12.500h13V24l-13-2z" fill="#fff" />
        </Svg>
      </button>
      <label className="flex w-[516px] items-center gap-4 border-2 border-[#bdbdbd] bg-[#f2f2f2] pl-4">
        <Svg w={26} h={26}>
          <circle cx="16" cy="9" r="7.500" stroke="#222" strokeWidth="1.800" />
          <path d="M11 15L1 25" stroke="#222" strokeWidth="1.800" />
        </Svg>
        <input
          aria-label="Search"
          placeholder="Type here to search"
          className="flex-1 pt-1 text-[21px] outline-none placeholder:text-[#333] placeholder:opacity-100"
        />
      </label>
      <button type="button" aria-label="Cortana" className="flex w-[72px] items-center justify-center">
        <Svg w={24} h={24}>
          <circle cx="12" cy="12" r="10" stroke="#fff" strokeWidth="3" />
        </Svg>
      </button>
      <button type="button" aria-label="Task view" className="mr-[3px] flex w-[72px] items-center justify-center">
        <Svg w={24} h={24}>
          <path d="M1 0v4h14V0M1 24v-4h14v4M1 7h14v10H1zM22 0v6M22 12v12" stroke="#fff" strokeWidth="1.500" />
          <path d="M20 7h4v4h-4z" fill="#fff" />
        </Svg>
      </button>
      {apps.map(({ name, icon, open, active }) => (
        <button
          type="button"
          key={name}
          aria-label={name}
          className={twMerge(
            "relative flex w-[75px] items-center justify-center",
            active && "bg-[#4a4a4a]"
          )}
        >
          {icon}
          {open && (
            <span className={twMerge("absolute bottom-0 h-[3px] bg-[#76b9ed]", active ? "w-full" : "w-[61px]")} />
          )}
        </button>
      ))}

      <div className="ml-auto flex items-center text-[17px] leading-7">
        <button type="button" className="flex items-center gap-3.5 pt-0.5 text-xl">
          <Svg w={32} h={30}>
            <path d="M8 22a7 7 0 0 1 0-13 8 8 0 0 1 15-2 7.500 7.500 0 0 1 1 15z" fill="#cfe9fb" />
            <path d="M8 22a7 7 0 0 1-4-11c3 5 14 7 25 4-1 4-3 7-6 7z" fill="#9fd3f7" />
            <path d="M16 17c3 5 4 6 4 8a4 4 0 0 1-8 0c0-2 1-3 4-8z" fill="#3f9df0" />
          </Svg>
          <span>83°F</span>
          <span>Light rain</span>
        </button>
        <button type="button" aria-label="Hidden icons" className="ml-[26px]">
          <Svg w={18} h={11}>
            <path d="M1 10l8-8 8 8" stroke="#fff" strokeWidth="1.500" />
          </Svg>
        </button>
        <Svg w={18} h={24} className="ml-5">
          <path d="M1 7h10v11H1zM11 10l5-2v9l-5-2M3 3c3-2 7-2 10 0M3 21c3 2 7 2 10 0" stroke="#fff" strokeWidth="1.300" />
        </Svg>
        <Svg w={24} h={18} className="ml-3">
          <path d="M5 5h16v11H5z" fill="#fff" stroke="#fff" />
          <path d="M22.500 8v5M1 1v4h5V1M3.500 5v10" stroke="#fff" strokeWidth="1.500" />
        </Svg>
        <Svg w={22} h={20} className="ml-3">
          <path d="M1 7h4l5-5v16l-5-5H1zM13 7c1.500 2 1.500 4 0 6M16 5c2.500 3 2.500 7 0 10" stroke="#fff" strokeWidth="1.300" />
          <path d="M19 2c3.500 5 3.500 11 0 16" stroke="#777" strokeWidth="1.300" />
        </Svg>
        <button type="button" className="ml-[18px] text-center">
          ENG
          <br />
          INTL
        </button>
        <button type="button" className="ml-[26px] text-center">
          2:43 PM
          <br />
          3/1/2022
        </button>
        <button type="button" aria-label="Notifications" className="relative mr-4 ml-8 h-[46px] w-[38px]">
          <Svg w={26} h={26} className="mt-1.5">
            <path d="M0 0h24v19h-9v6l-6-6H0z" fill="#fff" />
            <path d="M5 5.500h14M5 9.500h14M5 13.500h9" stroke="#1c1c1c" strokeWidth="1.500" />
          </Svg>
          <span className="absolute right-0 bottom-0 flex size-6 items-center justify-center rounded-full border border-[#999] bg-[#333] text-base leading-none font-semibold">
            4
          </span>
        </button>
        <span className="mr-1.5 h-[60px] w-0.5 bg-[#666]" />
      </div>
    </nav>
  );
}

export default function App() {
  return (
    <div className="flex h-screen flex-col overflow-hidden font-['Open_Sans','Noto_Sans',sans-serif]">
      <TitleBar />
      <Ribbon />
      <HorizontalRuler />
      <Workspace />
      <StatusBar />
      <Taskbar />
    </div>
  );
}
